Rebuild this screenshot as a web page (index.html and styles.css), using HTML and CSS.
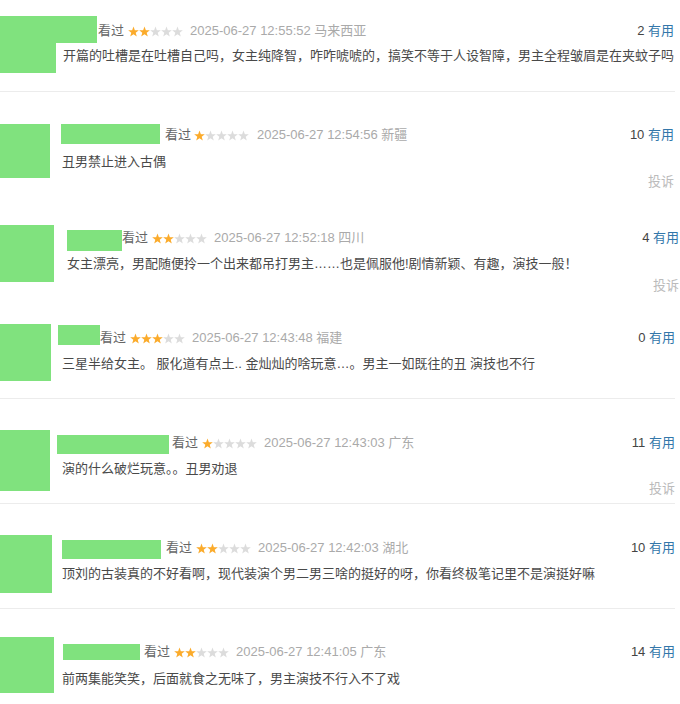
FILE: index.html
```html
<!DOCTYPE html>
<html lang="zh-CN">
<head>
<meta charset="utf-8">
<title>短评</title>
<link rel="stylesheet" href="styles.css">
</head>
<body>
<svg class="defs" width="0" height="0" aria-hidden="true">
  <symbol id="star" viewBox="0 0 11 11">
    <path d="M5.5 .4L6.85 4.14L10.83 4.27L7.69 6.71L8.79 10.53L5.5 8.3L2.21 10.53L3.31 6.71L.17 4.27L4.15 4.14Z"/>
  </symbol>
</svg>
<div class="list">
  <div class="item item-1 has-line">
    <div class="avatar"></div>
    <div class="main">
      <div class="head">
        <span class="name"></span>
        <span class="watched">看过</span>
        <span class="stars"><svg class="on"><use href="#star"/></svg><svg class="on"><use href="#star"/></svg><svg><use href="#star"/></svg><svg><use href="#star"/></svg><svg><use href="#star"/></svg></span>
        <span class="time">2025-06-27 12:55:52 马来西亚</span>
        <span class="vote"><span class="count">2</span> <a href="#">有用</a></span>
      </div>
      <p class="comment">开篇的吐槽是在吐槽自己吗，女主纯降智，咋咋唬唬的，搞笑不等于人设智障，男主全程皱眉是在夹蚊子吗</p>
    </div>
  </div>

  <div class="item item-2">
    <div class="avatar"></div>
    <div class="main">
      <div class="head">
        <span class="name"></span>
        <span class="watched">看过</span>
        <span class="stars"><svg class="on"><use href="#star"/></svg><svg><use href="#star"/></svg><svg><use href="#star"/></svg><svg><use href="#star"/></svg><svg><use href="#star"/></svg></span>
        <span class="time">2025-06-27 12:54:56 新疆</span>
        <span class="vote"><span class="count">10</span> <a href="#">有用</a></span>
      </div>
      <p class="comment">丑男禁止进入古偶</p>
      <div class="report">投诉</div>
    </div>
  </div>

  <div class="item item-3">
    <div class="avatar"></div>
    <div class="main">
      <div class="head">
        <span class="name"></span>
        <span class="watched">看过</span>
        <span class="stars"><svg class="on"><use href="#star"/></svg><svg class="on"><use href="#star"/></svg><svg><use href="#star"/></svg><svg><use href="#star"/></svg><svg><use href="#star"/></svg></span>
        <span class="time">2025-06-27 12:52:18 四川</span>
        <span class="vote"><span class="count">4</span> <a href="#">有用</a></span>
      </div>
      <p class="comment">女主漂亮，男配随便拎一个出来都吊打男主……也是佩服他!剧情新颖、有趣，演技一般！</p>
      <div class="report">投诉</div>
    </div>
  </div>

  <div class="item item-4 has-line">
    <div class="avatar"></div>
    <div class="main">
      <div class="head">
        <span class="name"></span>
        <span class="watched">看过</span>
        <span class="stars"><svg class="on"><use href="#star"/></svg><svg class="on"><use href="#star"/></svg><svg class="on"><use href="#star"/></svg><svg><use href="#star"/></svg><svg><use href="#star"/></svg></span>
        <span class="time">2025-06-27 12:43:48 福建</span>
        <span class="vote"><span class="count">0</span> <a href="#">有用</a></span>
      </div>
      <p class="comment">三星半给女主。 服化道有点土.. 金灿灿的啥玩意…。男主一如既往的丑 演技也不行</p>
    </div>
  </div>

  <div class="item item-5 has-line">
    <div class="avatar"></div>
    <div class="main">
      <div class="head">
        <span class="name"></span>
        <span class="watched">看过</span>
        <span class="stars"><svg class="on"><use href="#star"/></svg><svg><use href="#star"/></svg><svg><use href="#star"/></svg><svg><use href="#star"/></svg><svg><use href="#star"/></svg></span>
        <span class="time">2025-06-27 12:43:03 广东</span>
        <span class="vote"><span class="count">11</span> <a href="#">有用</a></span>
      </div>
      <p class="comment">演的什么破烂玩意。。丑男劝退</p>
      <div class="report">投诉</div>
    </div>
  </div>

  <div class="item item-6 has-line">
    <div class="avatar"></div>
    <div class="main">
      <div class="head">
        <span class="name"></span>
        <span class="watched">看过</span>
        <span class="stars"><svg class="on"><use href="#star"/></svg><svg class="on"><use href="#star"/></svg><svg><use href="#star"/></svg><svg><use href="#star"/></svg><svg><use href="#star"/></svg></span>
        <span class="time">2025-06-27 12:42:03 湖北</span>
        <span class="vote"><span class="count">10</span> <a href="#">有用</a></span>
      </div>
      <p class="comment">顶刘的古装真的不好看啊，现代装演个男二男三啥的挺好的呀，你看终极笔记里不是演挺好嘛</p>
    </div>
  </div>

  <div class="item item-7">
    <div class="avatar"></div>
    <div class="main">
      <div class="head">
        <span class="name"></span>
        <span class="watched">看过</span>
        <span class="stars"><svg class="on"><use href="#star"/></svg><svg class="on"><use href="#star"/></svg><svg><use href="#star"/></svg><svg><use href="#star"/></svg><svg><use href="#star"/></svg></span>
        <span class="time">2025-06-27 12:41:05 广东</span>
        <span class="vote"><span class="count">14</span> <a href="#">有用</a></span>
      </div>
      <p class="comment">前两集能笑笑，后面就食之无味了，男主演技不行入不了戏</p>
    </div>
  </div>
</div>
</body>
</html>
```

FILE: styles.css
```css
html, body {
  margin: 0;
  padding: 0;
  background: #fff;
}

body {
  font-family: "Liberation Sans", "Noto Sans CJK SC", sans-serif;
  font-size: 13px;
  line-height: 20px;
  color: #494949;
  overflow: hidden;
}

.defs {
  position: absolute;
  width: 0;
  height: 0;
}

.list {
  width: 675px;
}

.item {
  display: flex;
  align-items: flex-start;
  box-sizing: border-box;
}

.has-line {
  border-bottom: 1px solid #ececec;
}

.avatar {
  flex-shrink: 0;
  background: #80e27e;
}

.main {
  flex: 1;
  min-width: 0;
}

.head {
  display: flex;
  align-items: center;
  height: 20px;
  white-space: nowrap;
}

.name {
  flex-shrink: 0;
  align-self: flex-start;
  background: #80e27e;
}

.watched {
  color: #666;
}

.stars {
  display: inline-flex;
  margin: 0 7px 0 4px;
}

.stars svg {
  width: 11px;
  height: 11px;
  fill: #dcdcdc;
}

.stars svg.on {
  fill: #fbab2b;
}

.time {
  color: #aaa;
}

.vote {
  margin-left: auto;
  color: #444;
}

.vote a {
  color: #37a;
  text-decoration: none;
}

.comment {
  margin: 6px 0 0;
  white-space: nowrap;
}

.report {
  text-align: right;
  color: #bbb;
}

/* entry 1 */
.item-1 { height: 92px; padding-top: 16px; }
.item-1 .avatar { width: 56px; height: 57px; }
.item-1 .main { margin: 5px 1px 0 7px; }
.item-1 .name { width: 41px; height: 27px; margin: -5px 1px 0 -7px; }
.item-1 .comment { margin-top: 5px; }

/* entry 2 */
.item-2 { height: 116px; padding-top: 32px; }
.item-2 .avatar { width: 50px; height: 54px; }
.item-2 .main { margin: 1px 1px 0 12px; }
.item-2 .name { width: 99px; height: 20px; margin: -1px 5px 0 -1px; }
.item-2 .stars { margin-left: 3px; margin-right: 8px; }
.item-2 .comment { margin-top: 7px; }

/* entry 3 */
.item-3 { height: 100px; padding-top: 17px; }
.item-3 .avatar { width: 54px; height: 57px; }
.item-3 .main { margin: 3px -4px 0 13px; }
.item-3 .name { width: 55px; height: 21px; margin: 2px 0 0 0; }
.item-3 .report { margin-top: 2px; }

/* entry 4 */
.item-4 { height: 91px; padding-top: 16px; }
.item-4 .avatar { width: 51px; height: 57px; }
.item-4 .main { margin: 4px 0 0 11px; }
.item-4 .name { width: 42px; height: 20px; margin: -3px 0 0 -4px; }

/* entry 5 */
.item-5 { height: 105px; padding-top: 31px; }
.item-5 .avatar { width: 50px; height: 61px; }
.item-5 .main { margin: 3px 0 0 12px; }
.item-5 .name { width: 112px; height: 19px; margin: 2px 3px 0 -5px; }

/* entry 6 */
.item-6 { height: 105px; padding-top: 31px; }
.item-6 .avatar { width: 52px; height: 58px; }
.item-6 .main { margin: 3px 0 0 10px; }
.item-6 .name { width: 99px; height: 19px; margin: 2px 5px 0 0; }

/* entry 7 */
.item-7 { padding-top: 28px; }
.item-7 .avatar { width: 54px; height: 56px; }
.item-7 .main { margin: 5px 0 0 8px; }
.item-7 .name { width: 77px; height: 16px; margin: 2px 4px 0 1px; }
.item-7 .comment { margin-top: 7px; }
```
